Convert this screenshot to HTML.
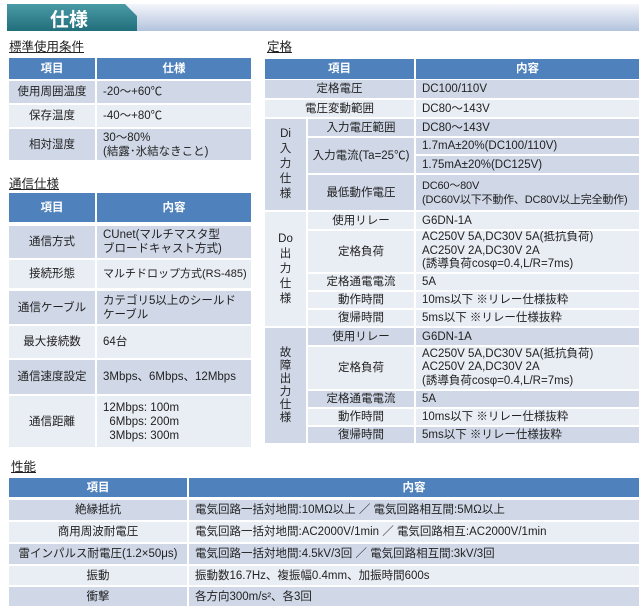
<!DOCTYPE html><html><head><meta charset="utf-8"><style>
*{margin:0;padding:0;box-sizing:border-box}
body{width:644px;height:610px;position:relative;background:#fff;font-family:"Liberation Sans","Noto Sans CJK JP",sans-serif;font-size:11px;color:#222;overflow:hidden}
.c{position:absolute;display:flex;align-items:center;line-height:14px;font-size:11.5px;white-space:nowrap;overflow:hidden}
.m{justify-content:center;text-align:center}
.l{padding-left:6px}
.h{background:#4f81bd;color:#fff;font-weight:bold;justify-content:center}
.d{background:#d0d8e8}.e{background:#e9edf4}
.t{position:absolute;font-size:12.5px;text-decoration:underline;color:#222}
</style></head><body>
<div style="position:absolute;left:7px;top:4px;width:632px;height:27px;background:linear-gradient(#f4f6fb,#b3c3dd)"></div>
<div style="position:absolute;left:7px;top:4px;width:130px;height:27px;background:linear-gradient(#4a9aa6,#226f7c);clip-path:polygon(0 0,118px 0,130px 12px,130px 100%,0 100%)"></div>
<div style="position:absolute;left:50px;top:5px;color:#fff;font-size:19px;font-weight:bold">仕様</div>

<div class="t" style="left:9px;top:36px">標準使用条件</div>
<div class="c h" style="left:9px;top:58px;width:86px;height:21px">項目</div>
<div class="c h" style="left:97px;top:58px;width:154px;height:21px">仕様</div>
<div class="c m d" style="left:9px;top:81px;width:86px;height:22px">使用周囲温度</div>
<div class="c l d" style="left:97px;top:81px;width:154px;height:22px">-20～+60℃</div>
<div class="c m e" style="left:9px;top:105px;width:86px;height:22px">保存温度</div>
<div class="c l e" style="left:97px;top:105px;width:154px;height:22px">-40～+80℃</div>
<div class="c m d" style="left:9px;top:129px;width:86px;height:31px">相対湿度</div>
<div class="c l d" style="left:97px;top:129px;width:154px;height:31px">30～80%<br>(結露･氷結なきこと)</div>

<div class="t" style="left:9px;top:173px">通信仕様</div>
<div class="c h" style="left:9px;top:193px;width:86px;height:29px">項目</div>
<div class="c h" style="left:97px;top:193px;width:154px;height:29px">内容</div>
<div class="c m d" style="left:9px;top:226px;width:86px;height:32px">通信方式</div>
<div class="c l d" style="left:97px;top:226px;width:154px;height:32px">CUnet(マルチマスタ型<br>ブロードキャスト方式)</div>
<div class="c m e" style="left:9px;top:260px;width:86px;height:28px">接続形態</div>
<div class="c l e" style="left:97px;top:260px;width:154px;height:28px;font-size:11px">マルチドロップ方式(RS-485)</div>
<div class="c m d" style="left:9px;top:291px;width:86px;height:33px">通信ケーブル</div>
<div class="c l d" style="left:97px;top:291px;width:154px;height:33px">カテゴリ5以上のシールド<br>ケーブル</div>
<div class="c m e" style="left:9px;top:326px;width:86px;height:32px">最大接続数</div>
<div class="c l e" style="left:97px;top:326px;width:154px;height:32px">64台</div>
<div class="c m d" style="left:9px;top:360px;width:86px;height:34px">通信速度設定</div>
<div class="c l d" style="left:97px;top:360px;width:154px;height:34px">3Mbps、6Mbps、12Mbps</div>
<div class="c m e" style="left:9px;top:396px;width:86px;height:51px">通信距離</div>
<div class="c l e" style="left:97px;top:396px;width:154px;height:51px">12Mbps: 100m<br>&nbsp;&nbsp;6Mbps: 200m<br>&nbsp;&nbsp;3Mbps: 300m</div>

<div class="t" style="left:267px;top:36px">定格</div>
<div class="c h" style="left:265px;top:59px;width:149px;height:20px">項目</div>
<div class="c h" style="left:416px;top:59px;width:223px;height:20px">内容</div>
<div class="c m d" style="left:265px;top:80px;width:149px;height:18px">定格電圧</div>
<div class="c l d" style="left:416px;top:80px;width:223px;height:18px">DC100/110V</div>
<div class="c m e" style="left:265px;top:100px;width:149px;height:17px">電圧変動範囲</div>
<div class="c l e" style="left:416px;top:100px;width:223px;height:17px">DC80～143V</div>
<div class="c m d" style="left:265px;top:119px;width:41px;height:91px;line-height:15px">Di<br>入<br>力<br>仕<br>様</div>
<div class="c m d" style="left:308px;top:119px;width:106px;height:17px">入力電圧範囲</div>
<div class="c l d" style="left:416px;top:119px;width:223px;height:17px">DC80～143V</div>
<div class="c m d" style="left:308px;top:138px;width:106px;height:35px">入力電流(Ta=25℃)</div>
<div class="c l d" style="left:416px;top:138px;width:223px;height:16px">1.7mA±20%(DC100/110V)</div>
<div class="c l d" style="left:416px;top:156px;width:223px;height:17px">1.75mA±20%(DC125V)</div>
<div class="c m d" style="left:308px;top:175px;width:106px;height:35px">最低動作電圧</div>
<div class="c l d" style="left:416px;top:175px;width:223px;height:35px;font-size:11px;letter-spacing:-0.2px">DC60～80V<br>(DC60V以下不動作、DC80V以上完全動作)</div>
<div class="c m e" style="left:265px;top:212px;width:41px;height:114px;line-height:15px">Do<br>出<br>力<br>仕<br>様</div>
<div class="c m e" style="left:308px;top:212px;width:106px;height:17px">使用リレー</div>
<div class="c l e" style="left:416px;top:212px;width:223px;height:17px">G6DN-1A</div>
<div class="c m e" style="left:308px;top:231px;width:106px;height:41px">定格負荷</div>
<div class="c l e" style="left:416px;top:231px;width:223px;height:41px;line-height:13.5px">AC250V 5A,DC30V 5A(抵抗負荷)<br>AC250V 2A,DC30V 2A<br>(誘導負荷cosφ=0.4,L/R=7ms)</div>
<div class="c m e" style="left:308px;top:274px;width:106px;height:16px">定格通電電流</div>
<div class="c l e" style="left:416px;top:274px;width:223px;height:16px">5A</div>
<div class="c m e" style="left:308px;top:292px;width:106px;height:16px">動作時間</div>
<div class="c l e" style="left:416px;top:292px;width:223px;height:16px">10ms以下 ※リレー仕様抜粋</div>
<div class="c m e" style="left:308px;top:310px;width:106px;height:16px">復帰時間</div>
<div class="c l e" style="left:416px;top:310px;width:223px;height:16px">5ms以下 ※リレー仕様抜粋</div>
<div class="c m d" style="left:265px;top:328px;width:41px;height:115px;line-height:13px">故<br>障<br>出<br>力<br>仕<br>様</div>
<div class="c m d" style="left:308px;top:328px;width:106px;height:17px">使用リレー</div>
<div class="c l d" style="left:416px;top:328px;width:223px;height:17px">G6DN-1A</div>
<div class="c m e" style="left:308px;top:347px;width:106px;height:42px">定格負荷</div>
<div class="c l e" style="left:416px;top:347px;width:223px;height:42px;line-height:13.5px">AC250V 5A,DC30V 5A(抵抗負荷)<br>AC250V 2A,DC30V 2A<br>(誘導負荷cosφ=0.4,L/R=7ms)</div>
<div class="c m d" style="left:308px;top:391px;width:106px;height:16px">定格通電電流</div>
<div class="c l d" style="left:416px;top:391px;width:223px;height:16px">5A</div>
<div class="c m e" style="left:308px;top:409px;width:106px;height:16px">動作時間</div>
<div class="c l e" style="left:416px;top:409px;width:223px;height:16px">10ms以下 ※リレー仕様抜粋</div>
<div class="c m d" style="left:308px;top:427px;width:106px;height:16px">復帰時間</div>
<div class="c l d" style="left:416px;top:427px;width:223px;height:16px">5ms以下 ※リレー仕様抜粋</div>

<div class="t" style="left:11px;top:456px">性能</div>
<div class="c h" style="left:9px;top:478px;width:178px;height:19px">項目</div>
<div class="c h" style="left:189px;top:478px;width:450px;height:19px">内容</div>
<div class="c m d" style="left:9px;top:500px;width:178px;height:20px">絶縁抵抗</div>
<div class="c l d" style="left:189px;top:500px;width:450px;height:20px">電気回路一括対地間:10MΩ以上 ／ 電気回路相互間:5MΩ以上</div>
<div class="c m e" style="left:9px;top:522px;width:178px;height:20px">商用周波耐電圧</div>
<div class="c l e" style="left:189px;top:522px;width:450px;height:20px">電気回路一括対地間:AC2000V/1min ／ 電気回路相互:AC2000V/1min</div>
<div class="c m d" style="left:9px;top:544px;width:178px;height:20px">雷インパルス耐電圧(1.2×50μs)</div>
<div class="c l d" style="left:189px;top:544px;width:450px;height:20px">電気回路一括対地間:4.5kV/3回 ／ 電気回路相互間:3kV/3回</div>
<div class="c m e" style="left:9px;top:566px;width:178px;height:19px">振動</div>
<div class="c l e" style="left:189px;top:566px;width:450px;height:19px">振動数16.7Hz、複振幅0.4mm、加振時間600s</div>
<div class="c m d" style="left:9px;top:587px;width:178px;height:19px">衝撃</div>
<div class="c l d" style="left:189px;top:587px;width:450px;height:19px">各方向300m/s²、各3回</div>
</body></html>
